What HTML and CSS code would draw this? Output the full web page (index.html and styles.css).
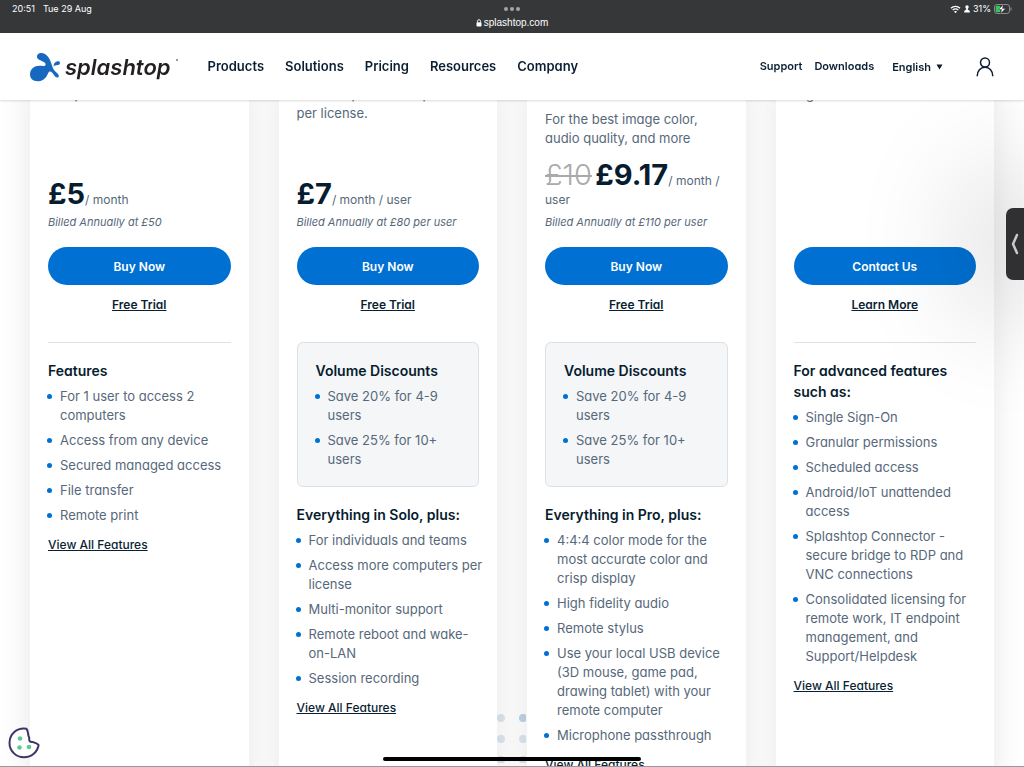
FILE: index.html
```
<!DOCTYPE html>
<html lang="en">
<head>
  <meta charset="UTF-8">
  <meta name="viewport" content="width=device-width, initial-scale=1.0">
  <title>Splashtop Pricing</title>
  <link rel="stylesheet" href="styles.css">
</head>
<body>
  <div class="status-bar">
    <div class="status-time"><span>20:51</span><span>Tue 29 Aug</span></div>
    <div class="status-address">
      <svg class="dots" viewBox="0 0 16 4"><circle cx="2" cy="2" r="2"/><circle cx="8" cy="2" r="2"/><circle cx="14" cy="2" r="2"/></svg>
      <div class="address">
        <svg class="lock" viewBox="0 0 6 8"><rect x="0.5" y="3.2" width="5" height="4.3" rx="0.8" fill="#fff"/><path d="M1.5 3.5V2.2a1.5 1.5 0 0 1 3 0v1.3" fill="none" stroke="#fff" stroke-width="0.9"/></svg>
        <span>splashtop.com</span>
      </div>
    </div>
    <div class="status-icons">
      <svg class="wifi" viewBox="0 0 12 9"><path d="M1 3.2C3.8.5 8.2.5 11 3.2M2.9 5.2c1.8-1.6 4.4-1.6 6.2 0" fill="none" stroke="#fff" stroke-width="1.4"/><path d="M4.3 6.7c1-.8 2.4-.8 3.4 0L6 8.5z" fill="#fff"/></svg>
      <svg class="person" viewBox="0 0 6 8"><circle cx="3" cy="2" r="1.7" fill="#fff"/><path d="M2.2 3h1.6v1.4L5.8 6v1.5H.2V6l2-1.6z" fill="#fff"/></svg>
      <span>31%</span>
      <svg class="battery" viewBox="0 0 18 10"><rect x="0.5" y="0.5" width="15" height="9" rx="2.6" fill="none" stroke="#8d8e90"/><rect x="1.7" y="1.7" width="4.6" height="6.6" rx="1.4" fill="#35c759"/><path d="M17 3.5v3" stroke="#8d8e90"/><path d="M9.3.6L4.6 5.5h3L6.7 9.4l4.8-5h-3z" fill="#fff" stroke="#363739" stroke-width="0.5"/></svg>
    </div>
  </div>

  <header class="header">
    <a class="logo" href="#">
      <svg class="logo-mark" viewBox="0 0 30 30" fill="#1769c0"><path d="M7 4.600C7 1.800 9.200.6 12 1c5 .9 8 5.600 9.600 11.200 1 3.600 2 6 5.400 8.800 2.400 1.900 2.300 4.700.3 4.600-2.300-.1-3.300-2.900-5.300-5-1.500-1.600-3-1.400-3.900.6-1.500 3.400-3.800 7.600-9.700 8C3.600 29.500 0 27 0 22.500 0 17 4.600 13.700 9.600 13.800c3.200.1 5.900.8 6-1.400.1-1.800-1.700-2.600-3.900-3.500C9.200 7.900 7 7.200 7 4.600z"/><path d="M23.700 14.400c-.2-3 1.500-4.800 3.900-5.100 1.800-.2 2.700.8 2.300 2.200-.5 1.700-2.300 1.500-3.700 1.700-1.200.1-1.900.5-2.500 1.200z"/></svg>
      <span>splashtop</span><i class="logo-dot"></i>
    </a>
    <nav class="nav">
      <a href="#">Products</a>
      <a href="#">Solutions</a>
      <a href="#">Pricing</a>
      <a href="#">Resources</a>
      <a href="#">Company</a>
    </nav>
    <div class="tools">
      <a href="#">Support</a>
      <a href="#">Downloads</a>
      <button class="language">English <svg viewBox="0 0 6 6"><path d="M0 .5h6l-3 5z"/></svg></button>
      <a class="account" href="#" aria-label="Account"><svg viewBox="0 0 18 20" fill="none" stroke="#0b1f33" stroke-width="1.5"><circle cx="9" cy="5.5" r="4.5"/><path d="M1.2 19.2c0-5.500 3.300-9 7.800-9s7.800 3.500 7.800 9"/></svg></a>
    </div>
  </header>

  <main class="page">
    <svg class="pattern" viewBox="0 0 30 50"><circle cx="5" cy="5" r="4"/><circle cx="27" cy="5" r="4" fill="#bfd3ea"/><circle cx="5" cy="26" r="4"/><circle cx="27" cy="26" r="4"/><circle cx="5" cy="47" r="4"/><circle cx="27" cy="47" r="4"/></svg>
    <div class="plans">
      <section class="plan">
        <div class="plan-top">
          <p class="intro">computers</p>
          <div>
            <p class="price"><strong>£5</strong>/ month</p>
            <p class="billed">Billed Annually at £50</p>
          </div>
        </div>
        <button class="buy">Buy Now</button>
        <a class="trial" href="#">Free Trial</a>
        <div class="features divided">
          <h3>Features</h3>
          <ul>
            <li>For 1 user to access 2 computers</li>
            <li>Access from any device</li>
            <li>Secured managed access</li>
            <li>File transfer</li>
            <li>Remote print</li>
          </ul>
          <a class="view-all" href="#">View All Features</a>
        </div>
      </section>

      <section class="plan">
        <div class="plan-top">
          <p class="intro">teams. Up to 10 computers<br>per license.</p>
          <div>
            <p class="price"><strong>£7</strong>/ month / user</p>
            <p class="billed">Billed Annually at £80 per user</p>
          </div>
        </div>
        <button class="buy">Buy Now</button>
        <a class="trial" href="#">Free Trial</a>
        <div class="volume">
          <h3>Volume Discounts</h3>
          <ul>
            <li>Save 20% for 4-9 users</li>
            <li>Save 25% for 10+ users</li>
          </ul>
        </div>
        <div class="features">
          <h3>Everything in Solo, plus:</h3>
          <ul>
            <li>For individuals and teams</li>
            <li>Access more computers per license</li>
            <li>Multi-monitor support</li>
            <li>Remote reboot and wake-on-LAN</li>
            <li>Session recording</li>
          </ul>
          <a class="view-all" href="#">View All Features</a>
        </div>
      </section>

      <section class="plan">
        <div class="plan-top">
          <p class="intro intro-low">For the best image color,<br>audio quality, and more</p>
          <div>
            <p class="price"><del>£10</del> <strong>£9.17</strong>/ month /<br>user</p>
            <p class="billed">Billed Annually at £110 per user</p>
          </div>
        </div>
        <button class="buy">Buy Now</button>
        <a class="trial" href="#">Free Trial</a>
        <div class="volume">
          <h3>Volume Discounts</h3>
          <ul>
            <li>Save 20% for 4-9 users</li>
            <li>Save 25% for 10+ users</li>
          </ul>
        </div>
        <div class="features">
          <h3>Everything in Pro, plus:</h3>
          <ul>
            <li>4:4:4 color mode for the most accurate color and crisp display</li>
            <li>High fidelity audio</li>
            <li>Remote stylus</li>
            <li>Use your local USB device (3D mouse, game pad, drawing tablet) with your remote computer</li>
            <li>Microphone passthrough</li>
          </ul>
          <a class="view-all" href="#">View All Features</a>
        </div>
      </section>

      <section class="plan">
        <div class="plan-top">
          <p class="intro">organizations</p>
        </div>
        <button class="buy">Contact Us</button>
        <a class="trial" href="#">Learn More</a>
        <div class="features divided">
          <h3>For advanced features<br>such as:</h3>
          <ul>
            <li>Single Sign-On</li>
            <li>Granular permissions</li>
            <li>Scheduled access</li>
            <li>Android/IoT unattended access</li>
            <li>Splashtop Connector - secure bridge to RDP and VNC connections</li>
            <li>Consolidated licensing for remote work, IT endpoint management, and Support/Helpdesk</li>
          </ul>
          <a class="view-all" href="#">View All Features</a>
        </div>
      </section>
    </div>
  </main>

  <button class="side-tab" aria-label="Open panel"><svg viewBox="0 0 8 22"><path d="M6 2L2 11l4 9" fill="none" stroke="#c9c9cb" stroke-width="2.5" stroke-linecap="round" stroke-linejoin="round"/></svg></button>
  <button class="cookie" aria-label="Cookie settings"><svg viewBox="0 0 32 32"><path d="M18.400 1.800C8.800.4 1.500 7.300 1.500 16c0 8 6.500 14.300 14.500 14.300 7.500 0 13.500-5.200 14.600-12.300-1.500-1.900-3-1.600-4.300-2.500-1.300-1-3.300.1-4.600-1.300-1.200-1.300.2-2.800-.8-4.300-1.200-1.900-.2-5.800-2.500-8.100z" fill="#fff" stroke="#3f3469" stroke-width="2" stroke-linejoin="round"/><g fill="#5acb98"><circle cx="12" cy="11.500" r="2.300"/><circle cx="11.500" cy="20.500" r="2.300"/><circle cx="21" cy="20" r="2.300"/></g></svg></button>
  <div class="home-bar"></div>
</body>
</html>
```
FILE: styles.css
```
* {
  box-sizing: border-box;
}
body {
  margin: 0;
  height: 100vh;
  overflow: hidden;
  display: flex;
  flex-direction: column;
  background: #fff;
  color: #56687a;
  font-family: Inter, "Open Sans", sans-serif;
  font-feature-settings: "cv11";
  font-size: 13px;
  line-height: 19px;
  border-bottom: 1px solid #999;
}
a {
  color: #0b1f33;
}
svg {
  display: block;
}
h3, p, ul {
  margin: 0;
}
button {
  font-family: inherit;
  font-feature-settings: inherit;
  border: 0;
  padding: 0;
}

/* status bar */
.status-bar {
  flex: none;
  display: grid;
  grid-template-columns: 1fr auto 1fr;
  height: 33px;
  padding: 0 12px;
  background: #363739;
  color: #fff;
  font-size: 9px;
  font-feature-settings: normal;
  line-height: 18px;
}
.status-time {
  display: flex;
  gap: 8px;
}
.status-address {
  display: flex;
  flex-direction: column;
  align-items: center;
  padding-top: 7px;
  font: 10px "Liberation Sans", sans-serif;
}
.dots {
  width: 16px;
  height: 4px;
  fill: #a5a6a8;
}
.address {
  display: flex;
  align-items: center;
  gap: 2px;
  line-height: 23px;
}
.lock {
  width: 6px;
  height: 8px;
}
.status-icons {
  display: flex;
  justify-content: flex-end;
  align-items: center;
  gap: 3px;
  height: 18px;
}
.wifi {
  width: 11px;
  height: 9px;
}
.person {
  width: 6px;
  height: 8px;
}
.battery {
  width: 18px;
  height: 10px;
}

/* header */
.header {
  flex: none;
  position: relative;
  z-index: 2;
  display: flex;
  align-items: center;
  height: 67px;
  padding: 0 30px;
  background: #fff;
  box-shadow: 0 1px 2px rgba(0, 0, 0, 0.15);
}
.header a {
  text-decoration: none;
}
.logo {
  display: flex;
  align-items: center;
  gap: 5px;
}
.logo span {
  color: #231f20;
  font-size: 22px;
  font-style: italic;
  font-weight: 600;
  line-height: 28px;
}
.logo-mark {
  width: 30px;
  height: 30px;
}
.logo-dot {
  width: 2px;
  height: 2px;
  margin-bottom: 14px;
  border-radius: 50%;
  background: #777;
}
.nav {
  display: flex;
  gap: 21px;
  margin-left: 30px;
  font-weight: 600;
  font-size: 13px;
}
.tools {
  display: flex;
  align-items: center;
  gap: 12px;
  margin-left: auto;
  font-weight: 600;
  font-size: 11px;
}
.language {
  display: flex;
  align-items: center;
  gap: 5px;
  margin: 0 21px 0 6px;
  background: none;
  color: #0b1f33;
  font-weight: 600;
  font-size: 11px;
}
.language svg {
  width: 7px;
  height: 6px;
  fill: #0b1f33;
}
.account svg {
  width: 18px;
  height: 20px;
}

/* plans */
.page {
  flex: 1;
  min-height: 0;
  position: relative;
  overflow: hidden;
}
.pattern {
  position: absolute;
  left: 496px;
  bottom: 3px;
  width: 30px;
  height: 50px;
  fill: #dce6f1;
}
.plans {
  position: relative;
  display: grid;
  grid-template-columns: repeat(4, 1fr);
  gap: 30px;
  margin-top: -15px;
  padding: 0 30px;
}
.plan {
  display: flex;
  flex-direction: column;
  min-height: 100vh;
  padding: 0 18px;
  background: #fff;
  box-shadow: 0 0 30px rgba(0, 0, 0, 0.1);
}
.plan-top {
  display: flex;
  flex-direction: column;
  justify-content: space-between;
  height: 162px;
  padding-bottom: 15px;
}
.intro-low {
  padding-top: 25px;
}
.price {
  font-size: 12px;
}
.price strong, .price del {
  font-size: 29px;
  line-height: 30px;
}
.price strong {
  color: #071c2f;
}
.price del {
  color: #aaa;
  font-weight: 300;
  text-decoration-thickness: 2px;
}
.billed {
  margin-top: 4px;
  font-size: 11px;
  font-style: italic;
}
.buy {
  height: 38px;
  border-radius: 19px;
  background: #0070d2;
  color: #fff;
  font-weight: 600;
  font-size: 12px;
}
.trial {
  align-self: center;
  margin: 10px 0 28px;
  font-weight: 600;
  font-size: 12px;
}
.divided {
  border-top: 1px solid #dfe3e6;
  padding-top: 17px;
}
.volume {
  margin-bottom: 17px;
  padding: 17px 18px;
  border: 1px solid #dce1e6;
  border-radius: 6px;
  background: #f4f6f8;
}
h3 {
  color: #071c2f;
  font-weight: 600;
  font-size: 14px;
  line-height: 21px;
}
ul {
  display: flex;
  flex-direction: column;
  gap: 6px;
  margin-top: 6px;
  padding: 0;
  list-style: none;
}
.features ul {
  margin-right: -8px;
}
li {
  position: relative;
  padding-left: 12px;
}
li::before {
  content: "";
  position: absolute;
  left: -1px;
  top: 7px;
  width: 5px;
  height: 5px;
  border-radius: 50%;
  background: #0070d2;
}
.view-all {
  display: inline-block;
  margin-top: 10px;
  font-size: 12px;
  font-weight: 500;
}

/* overlays */
.side-tab {
  position: fixed;
  z-index: 1;
  right: 0;
  top: 208px;
  display: flex;
  align-items: center;
  padding-left: 5px;
  width: 18px;
  height: 72px;
  border-radius: 7px 0 0 7px;
  background: #303032;
  box-shadow: 0 0 120px 30px rgba(0, 0, 0, 0.2);
}
.side-tab svg {
  width: 8px;
  height: 22px;
}
.cookie {
  position: fixed;
  left: 8px;
  bottom: 8px;
  background: none;
}
.cookie svg {
  width: 32px;
  height: 32px;
}
.home-bar {
  position: fixed;
  left: 50%;
  bottom: 6px;
  width: 258px;
  height: 4px;
  border-radius: 2px;
  background: #000;
  transform: translateX(-50%);
}
```
